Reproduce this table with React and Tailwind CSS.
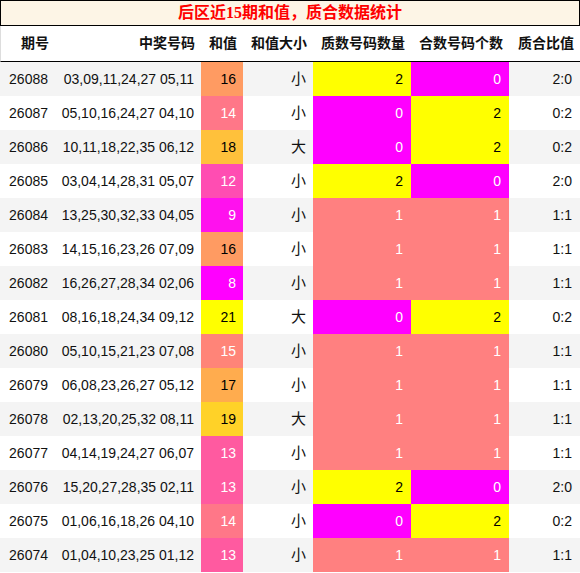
import React from 'react';

const rows = [
    ['26088', '03,09,11,24,27 05,11', 16, '小', 2, 0, '2:0'],
    ['26087', '05,10,16,24,27 04,10', 14, '小', 0, 2, '0:2'],
    ['26086', '10,11,18,22,35 06,12', 18, '大', 0, 2, '0:2'],
    ['26085', '03,04,14,28,31 05,07', 12, '小', 2, 0, '2:0'],
    ['26084', '13,25,30,32,33 04,05', 9, '小', 1, 1, '1:1'],
    ['26083', '14,15,16,23,26 07,09', 16, '小', 1, 1, '1:1'],
    ['26082', '16,26,27,28,34 02,06', 8, '小', 1, 1, '1:1'],
    ['26081', '08,16,18,24,34 09,12', 21, '大', 0, 2, '0:2'],
    ['26080', '05,10,15,21,23 07,08', 15, '小', 1, 1, '1:1'],
    ['26079', '06,08,23,26,27 05,12', 17, '小', 1, 1, '1:1'],
    ['26078', '02,13,20,25,32 08,11', 19, '大', 1, 1, '1:1'],
    ['26077', '04,14,19,24,27 06,07', 13, '小', 1, 1, '1:1'],
    ['26076', '15,20,27,28,35 02,11', 13, '小', 2, 0, '2:0'],
    ['26075', '01,06,16,18,26 04,10', 14, '小', 0, 2, '0:2'],
    ['26074', '01,04,10,23,25 01,12', 13, '小', 1, 1, '1:1'],
];

// sum value -> cell colour
const sumStyle = {
    8: 'bg-[#ff00ff] text-white',
    9: 'bg-[#ff11ee] text-white',
    12: 'bg-[#ff4db2] text-white',
    13: 'bg-[#ff5aa0] text-white',
    14: 'bg-[#ff7788] text-white',
    15: 'bg-[#ff8478] text-white',
    16: 'bg-[#ff9b62] text-black',
    17: 'bg-[#ffac4e] text-black',
    18: 'bg-[#ffc13b] text-black',
    19: 'bg-[#ffd228] text-black',
    21: 'bg-[#ffff00] text-black',
};

const countStyle = (n) => {
    if (n === 2) return 'bg-[#ffff00] text-black';
    if (n === 0) return 'bg-[#ff00ff] text-white';
    return 'bg-[#ff8080] text-white';
};

const cols = 'grid grid-cols-[55px_146px_42px_70px_98px_98px_71px]';
const cell = 'flex items-center justify-end pr-[7px]';

const App = () => {
    return (
        <div className="w-[580px] h-[573px] bg-white text-[#111] overflow-hidden" style={{ fontFamily: '"Liberation Sans", "Noto Sans CJK SC", sans-serif' }}>
            <div className="h-[26px] border border-black bg-[#fdf5e6] flex items-center justify-center text-[16px] font-bold text-[#ff0000]" style={{ fontFamily: '"Liberation Serif", "Noto Sans CJK SC", serif' }}>
                后区近15期和值，质合数据统计
            </div>
            <div className={`${cols} h-[36px] border-b border-black border-l border-l-[#dddddd] text-[14px] font-bold`}>
                <div className={cell}>期号</div>
                <div className={cell}>中奖号码</div>
                <div className={cell}>和值</div>
                <div className={cell}>和值大小</div>
                <div className={cell}>质数号码数量</div>
                <div className={cell}>合数号码个数</div>
                <div className={cell}>质合比值</div>
            </div>
            {rows.map((r, i) => (
                <div key={r[0]} className={`${cols} h-[34px] text-[14px] ${i % 2 === 0 ? 'bg-[#f4f4f4]' : 'bg-white'}`}>
                    <div className={cell}>{r[0]}</div>
                    <div className={cell}>{r[1]}</div>
                    <div className={`${cell} ${sumStyle[r[2]]}`}>{r[2]}</div>
                    <div className={`${cell} text-[15px]`}>{r[3]}</div>
                    <div className={`${cell} pr-[8px] ${countStyle(r[4])}`}>{r[4]}</div>
                    <div className={`${cell} pr-[8px] ${countStyle(r[5])}`}>{r[5]}</div>
                    <div className={`${cell} pr-[8px]`}>{r[6]}</div>
                </div>
            ))}
        </div>
    );
};

export default App;
